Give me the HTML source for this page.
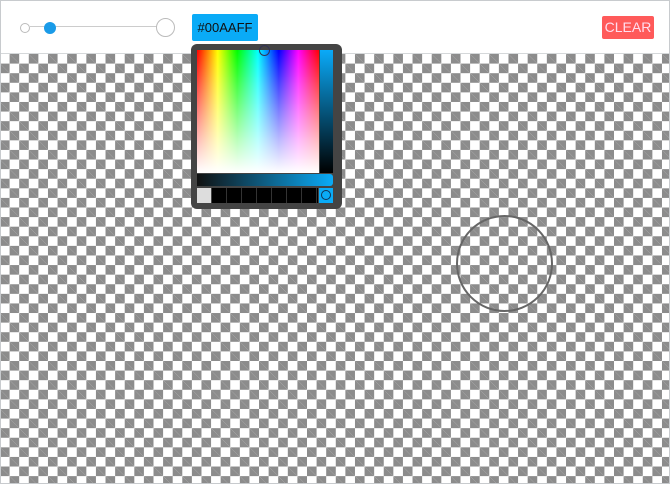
<!DOCTYPE html><html><head><style>
body{margin:0;width:670px;height:484px;overflow:hidden;font-family:"Liberation Sans",sans-serif;position:relative;background:#fff}
.frame{position:absolute;left:0;top:0;width:668px;height:482px;border:1px solid #c8cbce}
.hdr{position:absolute;left:1px;top:1px;width:668px;height:52px;background:#fff;border-bottom:1px solid #d5d8da}
.chk{position:absolute;left:1px;top:54px;width:668px;height:429px;background-color:#fff;
background-image:linear-gradient(45deg,#8c8c8c 25%,transparent 25%,transparent 75%,#8c8c8c 75%),linear-gradient(45deg,#8c8c8c 25%,transparent 25%,transparent 75%,#8c8c8c 75%);
background-size:19.2px 19.2px;background-position:-1px 0,8.6px 9.6px}
.ab{position:absolute}
</style></head><body>
<div class="chk"></div>
<div class="hdr"></div>
<div class="frame"></div>
<div class="ab" style="left:30px;top:26px;width:135px;height:1px;background:#ccc"></div>
<div class="ab" style="left:20px;top:23px;width:8px;height:8px;border:1px solid #bbb;border-radius:50%;background:#fff"></div>
<div class="ab" style="left:44px;top:22px;width:12px;height:12px;border-radius:50%;background:#1a9be8"></div>
<div class="ab" style="left:156px;top:18px;width:17px;height:17px;border:1px solid #bbb;border-radius:50%;background:#fff"></div>
<div class="ab" style="left:192px;top:14px;width:66px;height:27px;background:#0aabf7;border-radius:2px;color:#111;font-size:13px;line-height:27px;text-align:center">#00AAFF</div>
<div class="ab" style="left:602px;top:16px;width:52px;height:23px;background:#ff5a5a;border-radius:2px;color:#fde;font-size:14px;line-height:23px;text-align:center">CLEAR</div>
<div class="ab" style="left:191px;top:44px;width:151px;height:165px;background:#444;border-radius:6px"></div>
<div class="ab" style="left:197px;top:50px;width:122px;height:123px;background:linear-gradient(to bottom,rgba(255,255,255,0),#fff),linear-gradient(to right,#f00,#ff0 17%,#0f0 33%,#0ff 50%,#00f 67%,#f0f 83%,#f00)"></div>
<div class="ab" style="left:259px;top:45px;width:9px;height:9px;border:1px solid #335;border-radius:50%"></div>
<div class="ab" style="left:320px;top:50px;width:13px;height:123px;background:linear-gradient(#0aaaf8,#000)"></div>
<div class="ab" style="left:197px;top:174px;width:136px;height:12px;background:linear-gradient(to right,#111,#0aabf7);border-radius:0 3px 3px 0"></div>
<div class="ab" style="left:197px;top:188px;width:14px;height:15px;background:#ddd"></div>
<div class="ab" style="left:212px;top:188px;width:106px;height:15px;background:repeating-linear-gradient(to right,#000 0,#000 14px,#333 14px,#333 15px)"></div>
<div class="ab" style="left:319px;top:188px;width:14px;height:15px;background:#0aabf7"></div>
<div class="ab" style="left:321px;top:190px;width:8px;height:8px;border:1.5px solid #135;border-radius:50%"></div>
<div class="ab" style="left:456px;top:215px;width:93px;height:93px;border:2px solid #666;border-radius:50%"></div>
</body></html>
